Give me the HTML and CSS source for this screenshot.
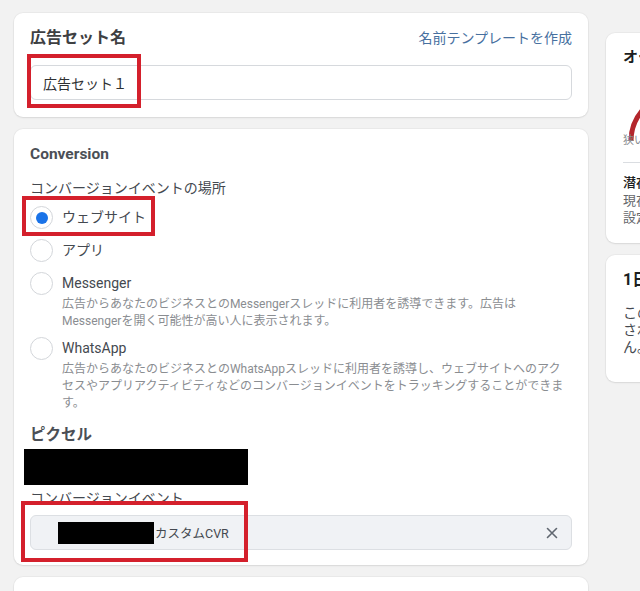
FILE: index.html
```html
<!DOCTYPE html>
<html lang="ja">
<head>
<meta charset="utf-8">
<link rel="stylesheet" href="styles.css">
</head>
<body>
<div class="page">
  <main class="main">
    <section class="card card-name">
      <div class="head-row">
        <h2 class="title">広告セット名</h2>
        <a class="link">名前テンプレートを作成</a>
      </div>
      <div class="input">広告セット１</div>
      <div class="mark mark1"></div>
    </section>

    <section class="card card-conv">
      <h2 class="title sm">Conversion</h2>
      <div class="label">コンバージョンイベントの場所</div>
      <div class="options">
        <div class="opt">
          <span class="radio on"></span>
          <div class="opt-body"><div class="opt-label">ウェブサイト</div></div>
        </div>
        <div class="opt">
          <span class="radio"></span>
          <div class="opt-body"><div class="opt-label">アプリ</div></div>
        </div>
        <div class="opt">
          <span class="radio"></span>
          <div class="opt-body">
            <div class="opt-label">Messenger</div>
            <div class="desc">広告からあなたのビジネスとのMessengerスレッドに利用者を誘導できます。広告はMessengerを開く可能性が高い人に表示されます。</div>
          </div>
        </div>
        <div class="opt">
          <span class="radio"></span>
          <div class="opt-body">
            <div class="opt-label">WhatsApp</div>
            <div class="desc">広告からあなたのビジネスとのWhatsAppスレッドに利用者を誘導し、ウェブサイトへのアクセスやアプリアクティビティなどのコンバージョンイベントをトラッキングすることができます。</div>
          </div>
        </div>
      </div>
      <h2 class="title sm pixel">ピクセル</h2>
      <div class="redact"></div>
      <div class="label ev">コンバージョンイベント</div>
      <div class="field">
        <span class="redact-sm"></span>
        <span class="field-text">カスタムCVR</span>
        <svg class="close" width="12" height="12" viewBox="0 0 12 12"><path d="M1.5 1.5 L10.5 10.5 M10.5 1.5 L1.5 10.5" stroke="#606770" stroke-width="1.6" stroke-linecap="round"/></svg>
      </div>
      <div class="mark mark2"></div>
      <div class="mark mark3"></div>
    </section>

    <section class="card card-next"></section>
  </main>

  <aside class="side">
    <section class="card side-a">
      <h3 class="side-title">オーディエンスの定義</h3>
      <div class="gauge">
        <svg width="120" height="60" viewBox="0 0 120 60"><path d="M13 56 A47 47 0 0 1 60 9" fill="none" stroke="#b3262c" stroke-width="5"/><path d="M60 9 A47 47 0 0 1 107 56" fill="none" stroke="#e4e6eb" stroke-width="5"/></svg>
      </div>
      <div class="scale">狭い　　　　　　　　広い</div>
      <hr class="divider">
      <div class="side-sub">潜在リーチ：利用できません</div>
      <div class="side-text">現在の設定では推定オーディエンスサイズを<br>設定できません。</div>
    </section>
    <section class="card side-b">
      <h3 class="side-title big">1日の推定結果</h3>
      <div class="side-body">この広告セットの推定結果は表示<br>されるまで時間がかかる場合がありませ<br>ん。</div>
    </section>
  </aside>
</div>
</body>
</html>
```
FILE: styles.css
```css
* { box-sizing: border-box; }
html, body {
  margin: 0;
  padding: 0;
  background: #f2f2f2;
  font-family: Roboto, "Noto Sans CJK JP", sans-serif;
  color: #1c1e21;
  overflow: hidden;
}
.page {
  display: flex;
  gap: 18px;
  padding: 13px 0 0 14px;
  width: 960px;
  height: 591px;
}
.main {
  width: 574px;
  flex: none;
  display: flex;
  flex-direction: column;
  gap: 12px;
}
.card {
  position: relative;
  background: #fff;
  border-radius: 9px;
  box-shadow: 0 0 0 1px rgba(0,0,0,0.03), 0 1px 2px rgba(0,0,0,0.08);
}
.card-name { padding: 15px 16px 17px; height: 104px; }
.head-row {
  display: flex;
  justify-content: space-between;
  align-items: center;
  height: 20px;
}
.title {
  margin: 0;
  font-size: 16px;
  font-weight: 700;
  line-height: 20px;
  color: #3e4042;
}
.title.sm { font-size: 15.5px; color: #4b4f56; }
.link {
  font-size: 14px;
  color: #47709f;
  line-height: 20px;
}
.input {
  margin-top: 17px;
  height: 35px;
  border: 1px solid #d6d9dd;
  border-radius: 6px;
  padding: 0 12px;
  display: flex;
  align-items: center;
  font-size: 14px;
  color: #2f3133;
}
.card-conv { padding: 15px 16px 17px; height: 436px; }
.label {
  margin-top: 14px;
  font-size: 14px;
  line-height: 20px;
  color: #444950;
}
.options {
  margin-top: 8px;
  display: flex;
  flex-direction: column;
  gap: 10px;
}
.opt {
  display: flex;
  gap: 9px;
  align-items: flex-start;
}
.opt:nth-child(4) { margin-top: -3px; }
.radio {
  flex: none;
  width: 23px;
  height: 23px;
  border: 1px solid #d3d6da;
  border-radius: 50%;
  display: flex;
  align-items: center;
  justify-content: center;
}
.radio.on::after {
  content: "";
  width: 12px;
  height: 12px;
  border-radius: 50%;
  background: #1a73e8;
}
.opt-body { flex: 1; }
.opt-label {
  font-size: 14px;
  line-height: 22px;
  color: #444950;
}
.desc {
  margin-top: 2px;
  font-size: 12px;
  line-height: 17px;
  color: #8a8d91;
}
.pixel { margin-top: 13px; }
.redact {
  margin: 4px 0 0 -6px;
  width: 224px;
  height: 36px;
  background: #000;
}
.label.ev { margin-top: 3px; }
.field {
  margin-top: 7px;
  height: 35px;
  background: #f0f2f5;
  border: 1px solid #dcdfe3;
  border-radius: 6px;
  display: flex;
  align-items: center;
  padding: 0 13px 0 27px;
}
.redact-sm {
  width: 96px;
  height: 22px;
  background: #000;
  flex: none;
}
.field-text {
  flex: 1;
  font-size: 12.5px;
  color: #444950;
  margin-left: 1px;
}
.close { flex: none; }
.card-next { height: 40px; flex: none; }
.mark {
  position: absolute;
  border: 4px solid #d4202c;
}
.mark1 { left: 13px; top: 41px; width: 114px; height: 54px; }
.mark2 { left: 8px; top: 67px; width: 133px; height: 40px; }
.mark3 { left: 7px; top: 372px; width: 227px; height: 61px; }

.side {
  margin-top: 20px;
  width: 300px;
  flex: none;
  display: flex;
  flex-direction: column;
  gap: 12px;
}
.side-a { height: 210px; padding: 14px 17px; }
.side-title {
  margin: 0;
  font-size: 15px;
  font-weight: 700;
  line-height: 20px;
  color: #1c1e21;
}
.side-title.big { font-size: 16px; }
.gauge { margin-top: 18px; height: 58px; margin-left: -5px; }
.scale {
  font-size: 11px;
  line-height: 14px;
  color: #8a8d91;
  margin-top: -9px;
}
.divider {
  margin: 14px 0 0;
  border: none;
  border-top: 1px solid #dadde1;
}
.side-sub {
  margin-top: 11px;
  font-size: 13px;
  font-weight: 500;
  line-height: 18px;
  color: #1c1e21;
}
.side-text {
  font-size: 13px;
  line-height: 17px;
  color: #65676b;
}
.side-b { height: 127px; padding: 15px 17px; }
.side-body {
  margin-top: 15px;
  font-size: 14px;
  line-height: 17px;
  color: #444950;
}
```
